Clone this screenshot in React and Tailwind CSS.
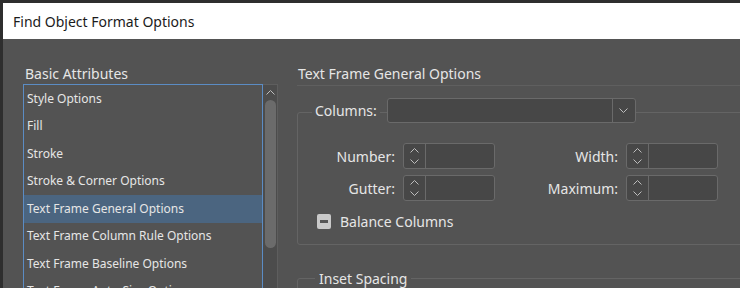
import React from "react";

const FONT = { fontFamily: '"Noto Sans", "Open Sans", sans-serif' };

function Chevron({ dir = "down", className = "" }) {
  return (
    <svg width="9" height="5" viewBox="0 0 9 5" className={className}>
      {dir === "down" ? (
        <path d="M0.5 0.5 L4.5 4.5 L8.5 0.5" fill="none" stroke="#bdbdbd" strokeWidth="1" />
      ) : (
        <path d="M0.5 4.5 L4.5 0.5 L8.5 4.5" fill="none" stroke="#bdbdbd" strokeWidth="1" />
      )}
    </svg>
  );
}

function Spinner() {
  return (
    <div className="flex h-[26px] w-[92px] rounded-[3px] border border-[#6a6a6a] bg-[#474747]">
      <div className="flex w-[22px] flex-col items-center justify-center gap-[6px] border-r border-[#6a6a6a]">
        <Chevron dir="up" />
        <Chevron dir="down" />
      </div>
      <div className="flex-1" />
    </div>
  );
}

const items = [
  "Style Options",
  "Fill",
  "Stroke",
  "Stroke & Corner Options",
  "Text Frame General Options",
  "Text Frame Column Rule Options",
  "Text Frame Baseline Options",
  "Text Frame Auto-Size Options",
];

export default function App() {
  return (
    <div
      className="flex h-[288px] w-[740px] flex-col overflow-hidden bg-[#2e2e2e] text-[#e6e6e6]"
      style={FONT}
    >
      <div className="h-[3px] shrink-0" />
      <div className="ml-[3px] flex h-[36px] shrink-0 items-center bg-white pl-[10px] text-[14px] text-[#1b1b1b]">
        Find Object Format Options
      </div>
      <div className="ml-[3px] flex flex-1 bg-[#535353]">
        {/* left column */}
        <div className="flex w-[294px] shrink-0 flex-col pl-[20px] pt-[25px]">
          <div className="h-[20px] pl-[2px] text-[14px] leading-[20px]">Basic Attributes</div>
          <div className="flex flex-1">
            <div className="w-[240px] border border-[#5b8cc4] bg-[#535353] text-[12px]">
              {items.map((t) => (
                <div
                  key={t}
                  className={
                    "flex h-[27.5px] items-center pl-[3px] whitespace-nowrap " +
                    (t === "Text Frame General Options" ? "bg-[#4b6580]" : "")
                  }
                >
                  {t}
                </div>
              ))}
            </div>
            <div className="flex w-[15px] flex-col items-center border-r border-t border-[#5e5e5e] bg-[#4c4c4c]">
              <div className="flex h-[15px] items-center">
                <Chevron dir="up" />
              </div>
              <div className="h-[148px] w-[11px] rounded-full bg-[#6b6b6b]" />
            </div>
          </div>
        </div>
        {/* right column */}
        <div className="flex flex-1 flex-col pt-[25px]">
          <div className="h-[20px] pl-[1px] text-[14px] leading-[20px]">Text Frame General Options</div>
          <div className="mt-[1px] border-t border-[#5f5f5f]" />
          <div className="mt-[26px] w-[480px] rounded-[3px] border border-[#646464] pb-[12px]">
            <div className="-mt-[15px] flex items-center pl-[14px]">
              <div className="bg-[#535353] px-[3px] text-[14px]">Columns:</div>
              <div className="ml-[7px] flex h-[25px] w-[249px] rounded-[3px] border border-[#6a6a6a] bg-[#474747]">
                <div className="flex-1" />
                <div className="flex w-[23px] items-center justify-center border-l border-[#6a6a6a]">
                  <Chevron dir="down" />
                </div>
              </div>
            </div>
            <div className="mt-[20px] grid grid-cols-[84px_92px_115px_92px] items-center gap-x-[8px] gap-y-[6px] pl-[13px] text-[14px]">
              <div className="text-right">Number:</div>
              <Spinner />
              <div className="text-right">Width:</div>
              <Spinner />
              <div className="text-right">Gutter:</div>
              <Spinner />
              <div className="text-right">Maximum:</div>
              <Spinner />
            </div>
            <div className="mt-[10px] flex items-center pl-[19px] text-[14px]">
              <div className="flex h-[15px] w-[14px] items-center justify-center rounded-[2px] bg-[#c9c9c9]">
                <div className="h-[3px] w-[8px] bg-[#555555]" />
              </div>
              <div className="ml-[9px]">Balance Columns</div>
            </div>
          </div>
          <div className="mt-[33px] w-[480px] rounded-[3px] border border-[#646464]">
            <div className="-mt-[10px] flex pl-[17px]">
              <div className="bg-[#535353] px-[4px] text-[14px] leading-[20px]">Inset Spacing</div>
            </div>
            <div className="h-[40px]" />
          </div>
        </div>
      </div>
    </div>
  );
}
